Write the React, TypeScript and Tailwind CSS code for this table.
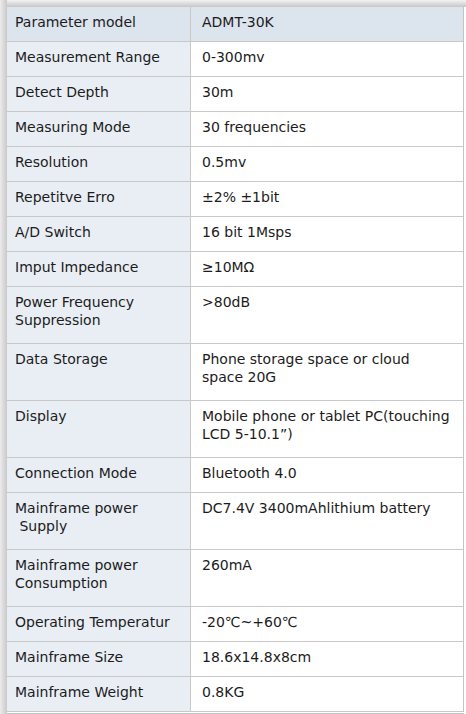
const rows: { k: React.ReactNode; v: React.ReactNode; tall?: boolean }[] = [
  { k: 'Measurement Range', v: '0-300mv' },
  { k: 'Detect Depth', v: '30m' },
  { k: 'Measuring Mode', v: '30 frequencies' },
  { k: 'Resolution', v: '0.5mv' },
  { k: 'Repetitve Erro', v: '±2% ±1bit' },
  { k: 'A/D Switch', v: '16 bit 1Msps' },
  { k: 'Imput Impedance', v: '≥10MΩ' },
  { k: <>Power Frequency<br />Suppression</>, v: '>80dB', tall: true },
  { k: 'Data Storage', v: <>Phone storage space or cloud<br />space 20G</>, tall: true },
  { k: 'Display', v: <>Mobile phone or tablet PC(touching<br />LCD 5-10.1”)</>, tall: true },
  { k: 'Connection Mode', v: 'Bluetooth 4.0' },
  { k: <>Mainframe power<br />{'\u00a0'}Supply</>, v: 'DC7.4V 3400mAhlithium battery', tall: true },
  { k: <>Mainframe power<br />Consumption</>, v: '260mA', tall: true },
  { k: 'Operating Temperatur', v: '-20℃~+60℃' },
  { k: 'Mainframe Size', v: '18.6x14.8x8cm' },
  { k: 'Mainframe Weight', v: '0.8KG' },
]

export default function App() {
  return (
    <div className="w-[466px] h-[714px] bg-white flex overflow-hidden text-[14px] leading-[18px] text-[#1c1c1c] font-['DejaVu_Sans','Verdana',sans-serif]">
      {/* left shadow strip */}
      <div className="w-[7px] shrink-0 bg-gradient-to-r from-[#ececec] to-[#c9c9c9]" />
      <div className="flex-1 flex flex-col">
        <div className="h-[7px] bg-gradient-to-b from-[#f3f3f3] to-[#c6c6c6]" />
        <div className="w-[457px] border-r border-[#c4c4c4]">
          <div className="grid grid-cols-[184px_1fr] h-[35px] bg-[#dce4ee] border-b border-[#c8c8c8]">
            <div className="pl-[8px] pt-[6px] border-r border-[#c8c8c8]">Parameter model</div>
            <div className="pl-[11px] pt-[6px]">ADMT-30K</div>
          </div>
          {rows.map((r, i) => (
            <div
              key={i}
              className={`grid grid-cols-[184px_1fr] border-b border-[#c8c8c8] ${r.tall ? 'h-[57px]' : 'h-[35px]'}`}
            >
              <div className="pl-[8px] pt-[6px] bg-[#e9eef4] border-r border-[#c8c8c8]">{r.k}</div>
              <div className="pl-[11px] pt-[6px] bg-white">{r.v}</div>
            </div>
          ))}
        </div>
        <div className="h-[1px] mt-[1px] w-[457px] bg-[#c4c4c4]" />
      </div>
    </div>
  )
}
